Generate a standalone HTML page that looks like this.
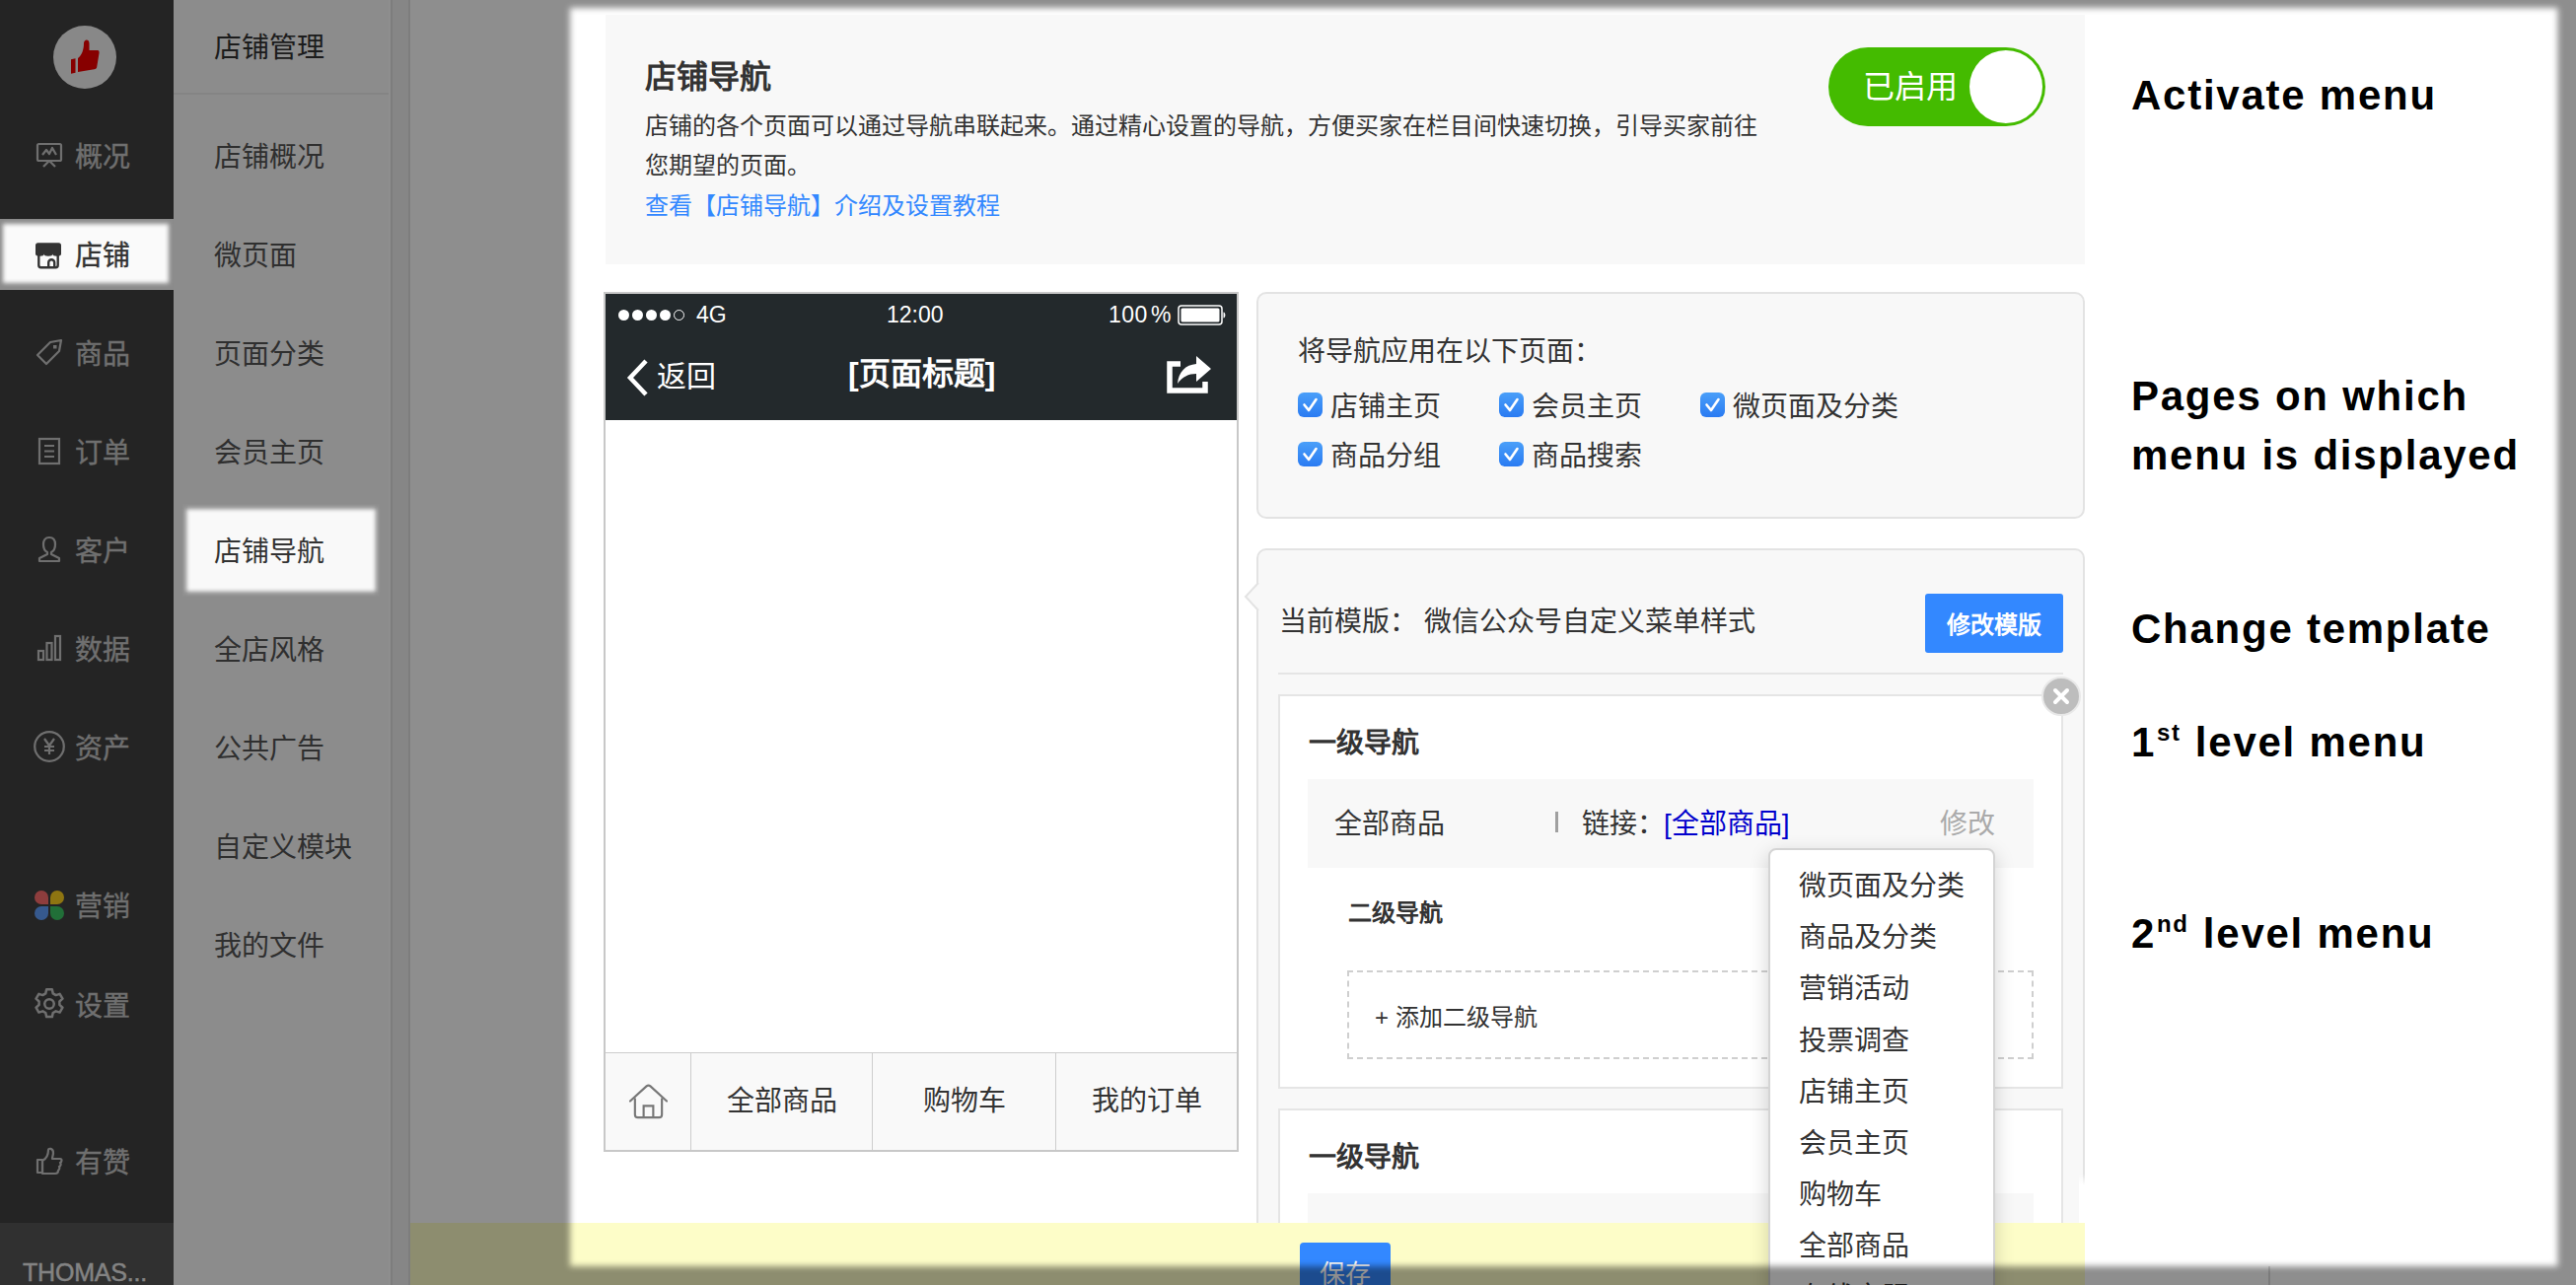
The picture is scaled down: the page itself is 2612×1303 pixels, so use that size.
<!DOCTYPE html>
<html lang="zh-CN">
<head>
<meta charset="utf-8">
<title>店铺导航</title>
<style>
*{box-sizing:border-box;margin:0;padding:0}
html,body{width:2612px;height:1303px;overflow:hidden;background:#fff}
body{position:relative;font-family:"Liberation Sans",sans-serif;color:#333;font-size:28px}
.abs{position:absolute}
.t{position:absolute;white-space:nowrap;line-height:1;margin-top:2px}
/* ---------- sidebar ---------- */
#side{position:absolute;left:0;top:0;width:176px;height:1303px;background:#424242}
#side .logo{position:absolute;left:54px;top:26px;width:64px;height:64px;border-radius:50%;background:#f4f4f4}
#side .it{position:absolute;left:0;width:176px;height:72px;color:#c8c8c8;font-size:28px}
#side .it span{-webkit-text-stroke:.35px currentColor;position:absolute;left:76px;top:50%;margin-top:-12.5px;line-height:30px;white-space:nowrap}
#side .it svg{position:absolute;left:34px;top:50%;margin-top:-16px;width:32px;height:32px}
#side .it.on{background:#fafafa;color:#333}
#side .user{position:absolute;left:0;top:1240px;width:176px;height:63px;background:#565656;color:#ececec;font-size:26px}
/* ---------- sub sidebar ---------- */
#sub{position:absolute;left:176px;top:0;width:220px;height:1303px;background:#fbfbfb;border-right:2px solid #fff}
#sub .hd{position:absolute;left:0;top:0;width:218px;height:96px;border-bottom:2px solid #ededed}
#sub .si{position:absolute;left:41px;margin-top:2.5px;font-size:28px;line-height:30px;color:#555;white-space:nowrap}
#sub .on{position:absolute;left:12px;top:514px;width:194px;height:88px;background:#f9f9f9;box-shadow:0 0 0 3px #fff}
#gap{position:absolute;left:396px;top:0;width:20px;height:1303px;background:#f0f0f0;border-right:2px solid #e0e0e0;border-left:2px solid #e0e0e0}
/* ---------- main ---------- */
#main{position:absolute;left:416px;top:0;width:2196px;height:1303px;background:#fff}
#page{position:absolute;left:578px;top:0;width:2034px;height:1303px;background:#fff}

/* ---------- header box ---------- */
#hbox{position:absolute;left:614px;top:15px;width:1500px;height:253px;background:#f8f8f8}
#toggle{position:absolute;left:1854px;top:48px;width:220px;height:80px;border-radius:40px;background:#44bb00}
#toggle i{position:absolute;left:143px;top:3px;width:74px;height:74px;border-radius:50%;background:#fff}
/* ---------- phone ---------- */
#phone{position:absolute;left:612px;top:296px;width:644px;height:872px;border:2px solid #c8c8c8;background:#fff}
#phone .hd{position:absolute;left:0;top:0;width:640px;height:128px;background:#23292c;color:#fff}
#phone .dot{position:absolute;top:16px;width:11px;height:11px;border-radius:50%;background:#fff}
#phone .nav{position:absolute;left:0;top:769px;width:640px;height:99px;border-top:1.500px solid #cdcdcd;background:#f9f9f9}
#phone .nav div{position:absolute;top:0;height:98px;border-left:1.500px solid #cdcdcd;text-align:center;line-height:97px;font-size:28px;color:#333}
/* ---------- panels ---------- */
.panel{position:absolute;left:1274px;width:840px;border:2px solid #e3e3e3;border-radius:10px;background:#f8f8f8}
.cb{position:absolute;width:25px;height:25px;border-radius:6px;background:linear-gradient(#4a9ff9,#2a7bf2)}
.cb svg{position:absolute;left:0;top:0;width:25px;height:25px}
.card{position:absolute;left:1296px;width:796px;border:2px solid #e5e5e5;background:#fff}
.grow{position:absolute;left:1326px;width:736px;height:90px;background:#f8f8f8}
#dd{position:absolute;left:1793px;top:860px;width:230px;height:500px;border:2px solid #d4d4d4;border-radius:8px;background:#fff;box-shadow:0 6px 20px rgba(0,0,0,.18)}
#dd div{position:absolute;left:29px;margin-top:3px;font-size:28px;line-height:30px;white-space:nowrap;color:#333}
#bar{position:absolute;left:416px;top:1240px;width:1698px;height:63px;background:#fdfdc8}
#save{position:absolute;left:1318px;top:1260px;width:92px;height:60px;border-radius:4px;background:#3388ff;color:#fff;font-size:26px}
.ann{position:absolute;left:2161px;font-weight:bold;font-size:42px;letter-spacing:1.75px;color:#000;white-space:nowrap;line-height:1}
.ann sup{font-size:24px;vertical-align:baseline;position:relative;top:-16px;letter-spacing:1.5px;margin:0 1px}
</style>
</head>
<body>
<div id="side">
  <div class="logo"><svg viewBox="0 0 64 64" width="64" height="64"><path d="M18 34.200l4.500-1v14.500l-4.500 1z" fill="#f20000"/><path d="M25 33c4-3 6-9 6-15 0-4.500 5.500-4.800 5.500 0v7h8.500c1.500 0 1.700 1.500 1.500 3l-2.300 14c-.3 1.500-1 2-2.700 2.300L25 47z" fill="#f20000"/></svg></div>
  <div class="it" style="top:121px"><svg viewBox="0 0 32 32"><rect x="4" y="5" width="24" height="17" rx="1.5" fill="none" stroke="currentColor" stroke-width="2.2"/><path d="M9 16l4-5 3 4 3-6 4 7" fill="none" stroke="currentColor" stroke-width="2.2" stroke-linejoin="round"/><path d="M16 22l-6 6M16 22l6 6" stroke="currentColor" stroke-width="2.2" fill="none"/></svg><span>概况</span></div>
  <div class="it on" style="top:221.5px"><svg viewBox="0 0 32 32"><path d="M4.500 4.300h21a2.500 2.500 0 0 1 2.500 2.500V15.500a4.330 2.200 0 0 1-8.670 0 4.330 2.200 0 0 1-8.670 0 4.330 2.200 0 0 1-8.660 0V6.800a2.500 2.500 0 0 1 2.500-2.500z" fill="currentColor"/><path d="M5.300 15v12a2.200 2.200 0 0 0 2.200 2.200h15a2.200 2.200 0 0 0 2.200-2.200V15" fill="none" stroke="currentColor" stroke-width="2.400"/><path d="M15.200 29.500v-5.200a3 3 0 0 1 6 0v5.200" fill="none" stroke="currentColor" stroke-width="2.400"/></svg><span>店铺</span></div>
  <div class="it" style="top:321px"><svg viewBox="0 0 32 32"><path d="M4 19L17 6l11-2-2 11-13 13z" fill="none" stroke="currentColor" stroke-width="2.2" stroke-linejoin="round"/><rect x="20" y="9" width="3.5" height="3.5" fill="currentColor"/></svg><span>商品</span></div>
  <div class="it" style="top:421px"><svg viewBox="0 0 32 32"><rect x="6" y="4" width="20" height="25" fill="none" stroke="currentColor" stroke-width="2.2"/><path d="M11 11h10M11 16.5h10M11 22h10" stroke="currentColor" stroke-width="2.2"/></svg><span>订单</span></div>
  <div class="it" style="top:521px"><svg viewBox="0 0 32 32"><path d="M16 4c4 0 6 3 6 7s-2 7-4 8v2l8 4v3H6v-3l8-4v-2c-2-1-4-4-4-8s2-7 6-7z" fill="none" stroke="currentColor" stroke-width="2.2" stroke-linejoin="round"/></svg><span>客户</span></div>
  <div class="it" style="top:621px"><svg viewBox="0 0 32 32"><rect x="5" y="19" width="5" height="9" fill="none" stroke="currentColor" stroke-width="2.2"/><rect x="13.5" y="11" width="5" height="17" fill="none" stroke="currentColor" stroke-width="2.2"/><rect x="22" y="4" width="5" height="24" fill="none" stroke="currentColor" stroke-width="2.2"/></svg><span>数据</span></div>
  <div class="it" style="top:721px"><svg viewBox="0 0 32 32"><circle cx="16" cy="16" r="14.800" fill="none" stroke="currentColor" stroke-width="2.2"/><path d="M11 8l5 7 5-7M16 15v9M11 16h10M11 20h10" fill="none" stroke="currentColor" stroke-width="2.2"/></svg><span>资产</span></div>
  <div class="it" style="top:881.6px"><svg viewBox="0 0 32 32"><path d="M15 15H8a7 7 0 1 1 7-7z" fill="#ff6e6e"/><path d="M17 15V8a7 7 0 1 1 7 7z" fill="#ffd21f"/><path d="M15 17v7a7 7 0 1 1-7-7z" fill="#62a0ff"/><path d="M17 17h7a7 7 0 1 1-7 7z" fill="#3cc765"/></svg><span>营销</span></div>
  <div class="it" style="top:982px"><svg viewBox="0 0 32 32"><g transform="translate(16 16) scale(1.13) translate(-16 -16)"><path d="M13.5 3h5l.8 3.6 2.6 1.5 3.5-1.1 2.5 4.3-2.7 2.5v3l2.7 2.5-2.5 4.3-3.5-1.1-2.6 1.5-.8 3.6h-5l-.8-3.6-2.6-1.5-3.5 1.1-2.5-4.3 2.7-2.5v-3L4.1 11.300l2.500-4.300 3.500 1.100 2.600-1.500z" fill="none" stroke="currentColor" stroke-width="2.2" stroke-linejoin="round"/><circle cx="16" cy="16" r="4.200" fill="none" stroke="currentColor" stroke-width="2.2"/></g></svg><span>设置</span></div>
  <div class="it" style="top:1141px"><svg viewBox="0 0 32 32"><path d="M4 15h5v13H4z" fill="none" stroke="currentColor" stroke-width="2.2" stroke-linejoin="round"/><path d="M9 16c4-2 6-6 6-11 0-2 5-2 5 3 0 2-1 4-1 6h8c2 0 2 3 0 4 1 1 1 3-1 4 1 1 0 3-1 4 0 2-1 3-3 3H9z" fill="none" stroke="currentColor" stroke-width="2.2" stroke-linejoin="round"/></svg><span>有赞</span></div>
  <div class="user"><div class="t" id="usr" style="left:23px;top:36px;font-size:25px;letter-spacing:-.2px;-webkit-text-stroke:.4px currentColor">THOMAS...</div></div>
</div>
<div id="sub"><div class="hd"></div><div class="on"></div><div class="si" style="top:31px;color:#333">店铺管理</div><div class="si" style="top:142px">店铺概况</div><div class="si" style="top:242.5px">微页面</div><div class="si" style="top:342px">页面分类</div><div class="si" style="top:442px">会员主页</div><div class="si" style="top:542px;color:#333">店铺导航</div><div class="si" style="top:642px">全店风格</div><div class="si" style="top:742px">公共广告</div><div class="si" style="top:842px">自定义模块</div><div class="si" style="top:942px">我的文件</div></div>
<div id="gap"></div>
<div id="main"></div>
<div id="page"></div>

<div id="hbox"></div>
<div class="t" style="left:654px;top:59.5px;font-size:32px;font-weight:bold;color:#333">店铺导航</div>
<div class="abs" style="left:654px;top:108px;width:1140px;font-size:24px;line-height:40px;color:#333">店铺的各个页面可以通过导航串联起来。通过精心设置的导航，方便买家在栏目间快速切换，引导买家前往您期望的页面。</div>
<div class="t" style="left:654px;top:195px;font-size:24px;color:#3388ff">查看【店铺导航】介绍及设置教程</div>
<div id="toggle"><div class="t" style="left:35px;top:22px;font-size:32px;color:#fff">已启用</div><i></i></div>

<div id="phone">
  <div class="hd">
    <div class="dot" style="left:13px"></div><div class="dot" style="left:27px"></div><div class="dot" style="left:41px"></div><div class="dot" style="left:55px"></div>
    <div class="dot" style="left:69px;background:none;border:1.5px solid #fff"></div>
    <div class="t" style="left:92px;top:7.5px;font-size:23px">4G</div>
    <div class="t" style="left:285px;top:7.5px;font-size:23px">12:00</div>
    <div class="t" style="left:510px;top:7.5px;font-size:23px;letter-spacing:.5px">100<span style="margin-left:3px">%</span></div>
    <svg class="abs" style="left:580px;top:11px" width="52" height="22" viewBox="0 0 52 22"><rect x="1" y="1" width="44" height="19" rx="3" fill="none" stroke="#fff" stroke-width="1.5"/><rect x="3.500" y="3.500" width="39" height="14" rx="1.5" fill="#fff"/><path d="M46.500 7.500c2.500 0 2.500 6 0 6z" fill="#fff"/></svg>
    <svg class="abs" style="left:20px;top:65px" width="26" height="40" viewBox="0 0 26 40"><path d="M21 3L5 20l16 17" fill="none" stroke="#fff" stroke-width="4.500" stroke-linejoin="miter"/></svg>
    <div class="t" style="left:52px;top:67px;font-size:30px">返回</div>
    <div class="t" style="left:246px;top:62.5px;font-size:32px;font-weight:bold">[页面标题]</div>
    <svg class="abs" style="left:569px;top:62px" width="46" height="42" viewBox="0 0 46 42"><path d="M14 9H3v27h36V27" fill="none" stroke="#fff" stroke-width="5.500"/><path d="M30 1l15 13-15 13v-8c-8 0-14 3-19 10 1-12 8-19 19-20z" fill="#fff"/></svg>
  </div>
  <div class="nav">
    <svg class="abs" style="left:23px;top:29px" width="41" height="39" viewBox="0 0 42 40"><path d="M2 20L19 4.500a3 3 0 0 1 4 0L40 20" fill="none" stroke="#777" stroke-width="2.200" stroke-linecap="round"/><path d="M7 17v17a3 3 0 0 0 3 3h22a3 3 0 0 0 3-3V17" fill="none" stroke="#777" stroke-width="2.200"/><path d="M16 37V25h10v12" fill="none" stroke="#777" stroke-width="2.200"/></svg>
    <div style="left:85.500px;width:185px">全部商品</div>
    <div style="left:270px;width:186px">购物车</div>
    <div style="left:455.500px;width:185px">我的订单</div>
  </div>
</div>

<div class="panel" style="top:296px;height:230px"></div>
<div class="t" style="left:1316px;top:341px;font-size:28px">将导航应用在以下页面：</div>
<div class="cb" style="left:1316px;top:398.0px"><svg viewBox="0 0 25 25"><path d="M6.500 12.500l4.500 5.500 7.500-11" fill="none" stroke="#fff" stroke-width="2.600" stroke-linecap="round" stroke-linejoin="round"/></svg></div><div class="t" style="left:1348.5px;top:396.5px;font-size:28px">店铺主页</div>
<div class="cb" style="left:1520px;top:398.0px"><svg viewBox="0 0 25 25"><path d="M6.500 12.500l4.500 5.500 7.500-11" fill="none" stroke="#fff" stroke-width="2.600" stroke-linecap="round" stroke-linejoin="round"/></svg></div><div class="t" style="left:1552.5px;top:396.5px;font-size:28px">会员主页</div>
<div class="cb" style="left:1724px;top:398.0px"><svg viewBox="0 0 25 25"><path d="M6.500 12.500l4.500 5.500 7.500-11" fill="none" stroke="#fff" stroke-width="2.600" stroke-linecap="round" stroke-linejoin="round"/></svg></div><div class="t" style="left:1756.5px;top:396.5px;font-size:28px">微页面及分类</div>
<div class="cb" style="left:1316px;top:448.0px"><svg viewBox="0 0 25 25"><path d="M6.500 12.500l4.500 5.500 7.500-11" fill="none" stroke="#fff" stroke-width="2.600" stroke-linecap="round" stroke-linejoin="round"/></svg></div><div class="t" style="left:1348.5px;top:446.5px;font-size:28px">商品分组</div>
<div class="cb" style="left:1520px;top:448.0px"><svg viewBox="0 0 25 25"><path d="M6.500 12.500l4.500 5.500 7.500-11" fill="none" stroke="#fff" stroke-width="2.600" stroke-linecap="round" stroke-linejoin="round"/></svg></div><div class="t" style="left:1552.5px;top:446.5px;font-size:28px">商品搜索</div>

<div class="panel" style="top:556px;height:800px"></div>
<svg class="abs" style="left:1261px;top:590px" width="16" height="30" viewBox="0 0 16 30"><path d="M15 1L2 15l13 14" fill="#f8f8f8" stroke="#e3e3e3" stroke-width="2"/></svg>
<div class="t" style="left:1297px;top:615px;font-size:28px">当前模版：</div>
<div class="t" style="left:1444px;top:615px;font-size:28px">微信公众号自定义菜单样式</div>
<div class="abs" style="left:1952px;top:602px;width:140px;height:60px;border-radius:3px;background:#3388ff"><div class="t" style="left:22px;top:18px;font-size:24px;color:#fff;font-weight:bold">修改模版</div></div>
<div class="abs" style="left:1296px;top:682px;width:796px;height:2px;background:#e5e5e5"></div>

<div class="card" style="top:704px;height:400px"></div>
<div class="t" style="left:1327px;top:738px;font-size:28px;font-weight:bold">一级导航</div>
<div class="grow" style="top:790px"></div>
<div class="t" style="left:1353px;top:820px;font-size:28px">全部商品</div>
<div class="abs" style="left:1577px;top:823px;width:3px;height:21px;background:#a0a0a0"></div>
<div class="t" style="left:1604px;top:820px;font-size:28px">链接：</div>
<div class="t" style="left:1687px;top:820px;font-size:28px;color:#0000cc">[全部商品]</div>
<div class="t" style="left:1967px;top:820px;font-size:28px;color:#aaa">修改</div>
<div class="t" style="left:1367px;top:912px;font-size:24px;font-weight:bold">二级导航</div>
<div class="abs" style="left:1366px;top:984px;width:696px;height:90px;border:2px dashed #cfcfcf"></div>
<div class="t" style="left:1394px;top:1018px;font-size:24px">+ 添加二级导航</div>

<div class="card" style="top:1124px;height:300px"></div>
<div class="t" style="left:1327px;top:1158px;font-size:28px;font-weight:bold">一级导航</div>
<div class="grow" style="top:1210px"></div>

<div class="abs" style="left:2108px;top:1190px;width:200px;height:113px;background:linear-gradient(rgba(255,255,255,0),#fff 12px)"></div>
<div id="bar"></div>
<div class="abs" style="left:2300px;top:1284px;width:2px;height:19px;background:#ddd"></div>
<div id="save"><div class="t" style="left:20px;top:17px">保存</div></div>

<div id="dd"><div style="top:19.2px">微页面及分类</div><div style="top:71.3px">商品及分类</div><div style="top:123.4px">营销活动</div><div style="top:175.5px">投票调查</div><div style="top:227.6px">店铺主页</div><div style="top:279.7px">会员主页</div><div style="top:331.8px">购物车</div><div style="top:383.9px">全部商品</div><div style="top:436.0px">在线客服</div></div>
<div class="abs" style="left:2070px;top:686px;width:40px;height:40px;border-radius:50%;background:#bdbdbd;border:2px solid #e8e8e8"><svg width="36" height="36" viewBox="0 0 36 36"><path d="M12 12l12 12M24 12L12 24" stroke="#fff" stroke-width="4" stroke-linecap="round"/></svg></div>

<div class="ann" style="top:76px">Activate menu</div>
<div class="ann" style="top:381px">Pages on which</div>
<div class="ann" style="top:441px">menu is displayed</div>
<div class="ann" style="top:617px">Change template</div>
<div class="ann" style="top:732px">1<sup>st</sup> level menu</div>
<div class="ann" style="top:926px">2<sup>nd</sup> level menu</div>

<!--CONTENT-->
<svg class="abs" style="left:0;top:0;pointer-events:none" width="2612" height="1303" viewBox="0 0 2612 1303">
<defs>
<filter id="b1" x="-10%" y="-10%" width="120%" height="120%"><feGaussianBlur stdDeviation="2.2"/></filter>
<filter id="b3" x="-2%" y="-2%" width="104%" height="104%"><feGaussianBlur stdDeviation="3"/></filter>
<mask id="mk" maskUnits="userSpaceOnUse" x="0" y="0" width="2612" height="1303">
<rect x="0" y="0" width="2612" height="1303" fill="#fff"/>
<rect x="3" y="227" width="168" height="60" fill="#000" filter="url(#b1)"/>
<rect x="189" y="516" width="192" height="84" fill="#000" filter="url(#b1)"/>
<rect x="578" y="8" width="2015.5" height="1276" fill="#000" filter="url(#b3)"/>
</mask>
</defs>
<rect x="0" y="0" width="2612" height="1303" fill="#000" fill-opacity="0.443" mask="url(#mk)"/>
</svg>
<!--OVERLAY-->
</body>
</html>
